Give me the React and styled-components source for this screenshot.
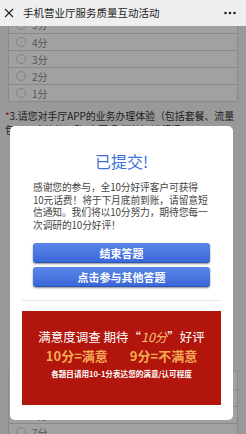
import React from 'react';
import styled, { createGlobalStyle } from 'styled-components';

const GlobalStyle = createGlobalStyle`
  html, body {
    margin: 0;
    padding: 0;
    background: #f3f3f3;
    font-family: "Noto Sans CJK SC", "Noto Sans", sans-serif;
    overflow: hidden;
  }
  * { box-sizing: border-box; }
`;

const Header = styled.div`
  height: 26px;
  background: #efefef;
  display: flex;
  align-items: center;
  padding: 0 10px 0 4px;
  color: #1c1c1c;
`;

const Title = styled.div`
  flex: 1;
  margin-left: 9px;
  font-size: 10.5px;
  line-height: 14px;
  white-space: nowrap;
`;

const Viewport = styled.div`
  height: 408px;
  overflow: hidden;
`;

const Page = styled.div`
  margin-top: -11px;
  padding: 0 8px 0 5px;
  display: flex;
  flex-direction: column;
`;

const Options = styled.div`
  margin-left: 3px;
  border: 1px solid #d9d9d9;
  border-radius: 2px;
  background: #fff;
`;

const Option = styled.div`
  height: 17px;
  display: flex;
  align-items: center;
  gap: 6px;
  padding-left: 7px;
  font-size: 10px;
  color: #888;
  & + & {
    border-top: 1px solid #d9d9d9;
  }
`;

const Radio = styled.span`
  width: 10px;
  height: 10px;
  border-radius: 50%;
  border: 1px solid #cfcfcf;
  background: #fff;
`;

const Question = styled.div`
  margin-top: 7px;
  font-size: 10px;
  line-height: 14px;
  color: #333;
  letter-spacing: -0.1px;
`;

const Star = styled.span`
  color: #e02020;
`;

const QuestionPicture = styled.div`
  height: 234px;
`;

const Overlay = styled.div`
  position: fixed;
  inset: 26px 0 0 0;
  z-index: 10;
  background: rgba(0, 0, 0, 0.37);
  padding: 100px 13px 0 10px;
`;

const Modal = styled.div`
  width: 223px;
  height: 294px;
  background: #fff;
  border-radius: 5px;
  padding: 25px 12px 15px;
  display: flex;
  flex-direction: column;
`;

const Inner = styled.div`
  padding: 0 11px;
  display: flex;
  flex-direction: column;
`;

const Done = styled.div`
  text-align: center;
  font-size: 16px;
  line-height: 20px;
  color: #3d6fd8;
`;

const Message = styled.p`
  margin: 10px 0 0;
  font-size: 9.8px;
  line-height: 12.5px;
  color: #444;
  white-space: nowrap;
  letter-spacing: -0.15px;
`;

const Buttons = styled.div`
  margin-top: 12px;
  display: flex;
  flex-direction: column;
  gap: 4px;
`;

const Button = styled.button`
  height: 20px;
  border: none;
  border-bottom: 1px solid #2b54b8;
  border-radius: 3px;
  background: linear-gradient(#5b86ea, #3a67d8);
  box-shadow: 0 1px 2px rgba(0, 0, 0, 0.45);
  color: #fff;
  font-family: inherit;
  font-size: 11px;
  font-weight: 700;
  padding: 0;
`;

const Divider = styled.hr`
  margin: 13px 0 0;
  border: none;
  border-top: 1px solid #e6e6e6;
`;

const Banner = styled.div`
  margin-top: 10px;
  height: 94px;
  background: #b1150b;
  display: flex;
  flex-direction: column;
  align-items: center;
  padding-top: 17px;
`;

const Slogan = styled.div`
  font-size: 12.5px;
  line-height: 17px;
  color: #fff;
  white-space: nowrap;
`;

const Ten = styled.span`
  color: #f5c27c;
  font-style: italic;
`;

const Scale = styled.div`
  margin-top: 3px;
  font-size: 13px;
  line-height: 16px;
  font-weight: 700;
  color: #f4aa55;
  display: flex;
  gap: 22px;
`;

const Hint = styled.div`
  margin-top: 5px;
  font-size: 7.6px;
  line-height: 10px;
  font-weight: 700;
  color: #fff;
  white-space: nowrap;
`;

const CloseIcon = () => (
  <svg width="10" height="10" viewBox="0 0 10 10">
    <path d="M1 1 L9 9 M9 1 L1 9" stroke="#222" strokeWidth="1.1" />
  </svg>
);

const MoreIcon = () => (
  <svg width="12" height="4" viewBox="0 0 12 4">
    <circle cx="1.5" cy="2" r="1.3" fill="#222" />
    <circle cx="6" cy="2" r="1.3" fill="#222" />
    <circle cx="10.5" cy="2" r="1.3" fill="#222" />
  </svg>
);

const firstScores = ['5分', '4分', '3分', '2分', '1分'];
const nextScores = ['10分', '9分', '8分', '7分'];

export default function App() {
  return (
    <>
      <GlobalStyle />
      <Header>
        <CloseIcon />
        <Title>手机营业厅服务质量互动活动</Title>
        <MoreIcon />
      </Header>
      <Viewport>
        <Page>
          <Options>
            {firstScores.map((s) => (
              <Option key={s}>
                <Radio />
                {s}
              </Option>
            ))}
          </Options>
          <Question>
            <Star>*</Star>3.请您对手厅APP的业务办理体验（包括套餐、流量包、日志等的订购/变更/取消等）进行评价
          </Question>
          <QuestionPicture />
          <Options>
            {nextScores.map((s) => (
              <Option key={s}>
                <Radio />
                {s}
              </Option>
            ))}
          </Options>
        </Page>
      </Viewport>
      <Overlay>
        <Modal>
          <Inner>
            <Done>已提交!</Done>
            <Message>
              感谢您的参与，全10分好评客户可获得
              <br />
              10元话费！将于下月底前到账，请留意短
              <br />
              信通知。我们将以10分努力，期待您每一
              <br />
              次调研的10分好评！
            </Message>
            <Buttons>
              <Button>结束答题</Button>
              <Button>点击参与其他答题</Button>
            </Buttons>
          </Inner>
          <Divider />
          <Banner>
            <Slogan>
              满意度调查 期待“<Ten>10分</Ten>”好评
            </Slogan>
            <Scale>
              <span>10分=满意</span>
              <span>9分=不满意</span>
            </Scale>
            <Hint>各题目请用10-1分表达您的满意/认可程度</Hint>
          </Banner>
        </Modal>
      </Overlay>
    </>
  );
}
